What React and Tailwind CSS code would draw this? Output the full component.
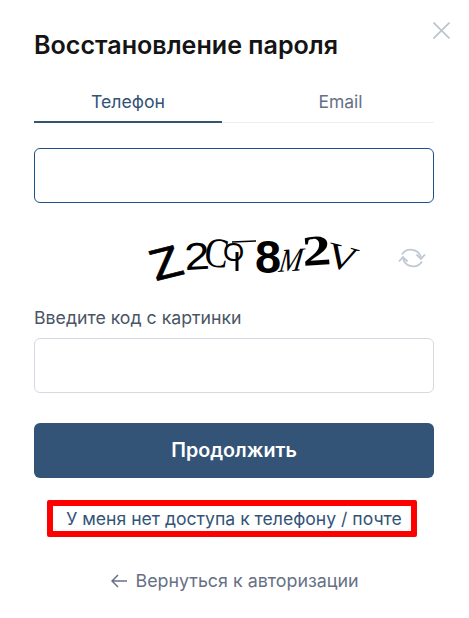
function Captcha() {
  const serif = "Liberation Serif";
  const sans = "Liberation Sans";
  const chars = [
    { c: "Z", x: 156, y: 281, size: 48, t: "rotate(-14) skewX(6) scale(1.05 0.92)", w: 400, font: sans, thick: 0.8 },
    { c: "2", x: 185, y: 270, size: 38, t: "rotate(-3) scale(1.2 1)", w: 400, font: sans },
    { c: "C", x: 203, y: 265, size: 42, t: "rotate(8) scale(0.85 1)", w: 400, font: serif },
    { c: "O", x: 223, y: 261, size: 26, t: "scale(1.05 1)", w: 400, font: sans },
    { c: "8", x: 255, y: 273, size: 46, t: "scale(1.02 1)", w: 700, font: sans },
    { c: "M", x: 278, y: 272, size: 33, t: "rotate(-4) skewX(-12) scale(0.85 1)", w: 400, font: serif, italic: true },
    { c: "2", x: 303, y: 266, size: 43, t: "rotate(-4) scale(1.35 1)", w: 700, font: serif },
    { c: "V", x: 324, y: 265, size: 36, t: "rotate(15) scale(1.2 1)", w: 400, font: serif },
  ];
  return (
    <svg width="220" height="55" viewBox="145 230 220 55" className="shrink-0 overflow-visible">
      {chars.map((ch, i) => (
        <text
          key={i}
          transform={`translate(${ch.x} ${ch.y}) ${ch.t}`}
          fontFamily={ch.font}
          fontSize={ch.size}
          fontWeight={ch.w}
          fontStyle={ch.italic ? "italic" : "normal"}
          fill="#000"
          stroke={ch.thick ? "#000" : "none"}
          strokeWidth={ch.thick || 0}
        >
          {ch.c}
        </text>
      ))}
      {/* stem and bar of the fourth character */}
      <path d="M237 252 L237 271" stroke="#000" strokeWidth="3" />
      <path d="M232 242 L256 241" stroke="#000" strokeWidth="1.5" />
    </svg>
  );
}

function SyncIcon() {
  return (
    <svg width="28" height="26" viewBox="0 0 28 26" fill="none" stroke="#c0c8d2" strokeWidth="1.8" className="shrink-0">
      <path d="M4 9.5 A10.5 10.5 0 0 1 23 12.5" />
      <path d="M18.5 9.5 L23 14 L27 9.5" />
      <path d="M24 16.5 A10.5 10.5 0 0 1 5 13.5" />
      <path d="M1 16.5 L5 12 L9.5 16.5" />
    </svg>
  );
}

export default function App() {
  return (
    <div className="relative w-[469px] h-[618px] bg-white pl-[34px] pr-[35px] pt-[29px] font-['Inter',sans-serif] overflow-hidden">
      {/* Close */}
      <button className="absolute top-[22px] left-[433px]">
        <svg width="17" height="17" viewBox="0 0 17 17" stroke="#bcc3cd" strokeWidth="1.6" className="block">
          <path d="M0.5 0.5 L16.5 16.5 M16.5 0.5 L0.5 16.5" />
        </svg>
      </button>

      <h1 className="text-[25.1px] leading-[32px] font-semibold text-[#141414]">
        Восстановление пароля
      </h1>

      {/* Tabs */}
      <div className="flex mt-[22px] border-b border-[#eceef1] h-[40px]">
        <div className="w-[188px] h-[40px] border-b-2 border-[#335377] text-center text-[17.7px] leading-[38px] text-[#335377]">
          Телефон
        </div>
        <div className="flex-1 pl-[25px] text-center text-[17.5px] leading-[38px] text-[#667085]">
          Email
        </div>
      </div>

      <input
        type="text"
        className="block w-full h-[55px] mt-[25px] rounded-md border border-[#1d4f8c] bg-white px-3 outline-none"
      />

      {/* Captcha */}
      <div className="flex items-center mt-[27px] h-[55px] pl-[111px]">
        <Captcha />
        <div className="ml-[33px]">
          <SyncIcon />
        </div>
      </div>

      <label className="block mt-[21px] text-[17.7px] leading-[24px] text-[#4a5565]">
        Введите код с картинки
      </label>
      <input
        type="text"
        className="block w-full h-[55px] mt-[8px] rounded-md border border-[#d5d9e2] bg-white px-3 outline-none"
      />

      <button className="block w-full h-[55px] mt-[30px] rounded-md bg-[#335377] text-white text-[19.7px] font-semibold">
        Продолжить
      </button>

      <div className="ml-[13px] mr-[17px] mt-[22px] h-[37px] rounded-[2px] border-[6px] border-[#fe0000] flex items-center justify-center pl-[4px]">
        <span className="text-[17.6px] leading-[24px] text-[#335377] whitespace-nowrap">
          У меня нет доступа к телефону / почте
        </span>
      </div>

      <div className="flex items-center justify-center gap-[8px] mt-[32px] pl-[2px] text-[17.85px] leading-[24px] text-[#667085]">
        <svg width="16" height="14" viewBox="0 0 16 14" fill="none" stroke="#667085" strokeWidth="1.5" className="shrink-0">
          <path d="M16 7 L1 7 M7 1 L1 7 L7 13" />
        </svg>
        Вернуться к авторизации
      </div>
    </div>
  );
}
